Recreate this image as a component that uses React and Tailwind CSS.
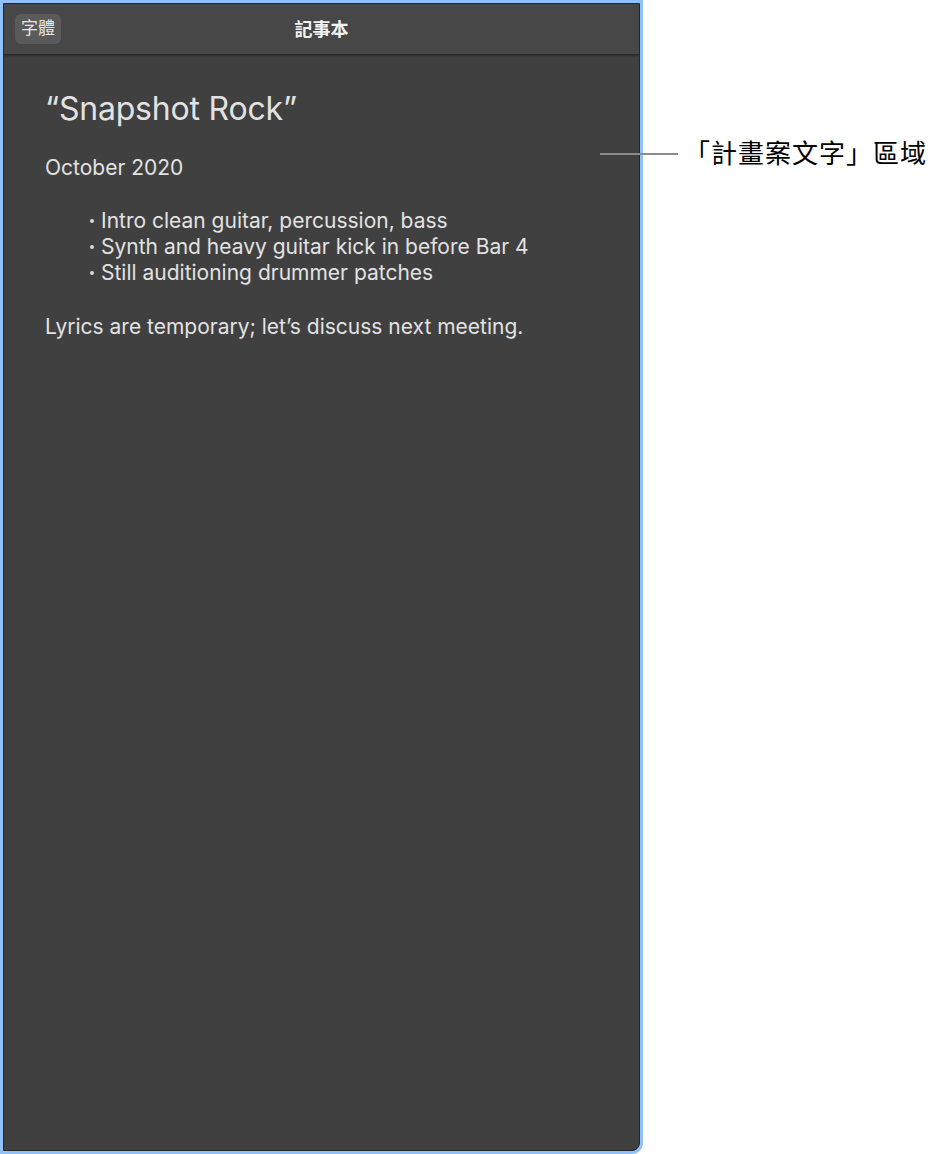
export default function App() {
  const bullets = [
    "Intro clean guitar, percussion, bass",
    "Synth and heavy guitar kick in before Bar 4",
    "Still auditioning drummer patches",
  ];

  return (
    <div
      className="relative w-[936px] h-[1154px] bg-white"
      style={{ fontFamily: 'Inter, "Noto Sans CJK TC", sans-serif' }}
    >
      <div className="w-[643px] h-[1154px] border-[3px] border-[#8fc1fb] rounded-br-[11px] bg-[#8fc1fb]">
        <div className="h-full flex flex-col border border-[#262626] rounded-br-[8px] overflow-hidden bg-[#404040]">
          <div className="relative h-[51px] flex items-center bg-[#474747] border-b border-[#2c2c2c] shadow-[0_1px_2px_rgba(0,0,0,0.35)]">
            <div className="ml-[11px] h-[30px] px-[6px] flex items-center rounded-[6px] bg-[#5a5a5a] text-[17px] text-[#e6e6e6]">
              字體
            </div>
            <div className="absolute left-0 right-0 text-center text-[18px] font-bold text-[#f2f2f2] pointer-events-none">
              記事本
            </div>
          </div>
          <div className="flex-1 pl-[41px] pt-[36px] text-[#e2e2e2]">
            <div className="text-[32px] leading-[36px] tracking-[-0.2px]">“Snapshot Rock”</div>
            <div className="mt-[28px] text-[21px] leading-[26px]">October 2020</div>
            <ul className="mt-[27px] ml-[42px] text-[21px] leading-[26px]">
              {bullets.map((b) => (
                <li key={b} className="flex items-center">
                  <span className="w-[14px] shrink-0 flex items-center">
                    <span className="w-[4px] h-[4px] ml-[3px] rounded-full bg-[#d8d8d8]" />
                  </span>
                  <span>{b}</span>
                </li>
              ))}
            </ul>
            <div className="mt-[28px] text-[21px] leading-[26px]">
              Lyrics are temporary; let’s discuss next meeting.
            </div>
          </div>
        </div>
      </div>

      <div className="absolute left-[600px] top-[139px] flex items-center">
        <div className="w-[78px] h-[2px] bg-[#8a8a8a]" />
        <div className="ml-[6px] text-[26px] leading-[30px] tracking-[1px] text-black">「計畫案文字」區域</div>
      </div>
    </div>
  );
}
